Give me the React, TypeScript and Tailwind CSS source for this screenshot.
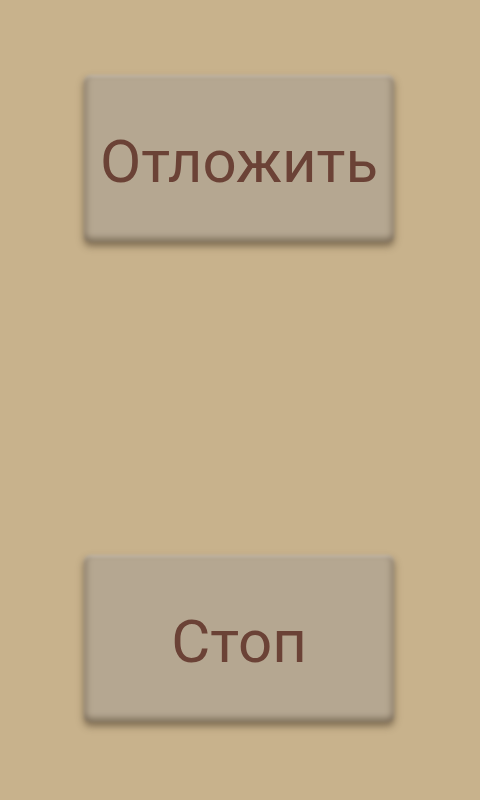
import React from "react";

function Btn({ label }: { label: string }) {
  return (
    <div className="relative w-[310px] h-[167px] flex items-center justify-center">
      <div className="absolute inset-0 rounded-[6px] bg-[#b5a791] blur-[1.5px] shadow-[0_4px_7px_rgba(60,45,30,0.55),inset_0_2px_2px_rgba(255,255,255,0.35),inset_0_-5px_5px_rgba(80,65,45,0.35),inset_4px_0_5px_rgba(90,75,55,0.22),inset_-4px_0_5px_rgba(90,75,55,0.22)]" />
      <span className="relative text-[60px] leading-none text-[#6b4236] pt-[6px]" style={{ fontFamily: "Roboto, 'Noto Sans', sans-serif" }}>
        {label}
      </span>
    </div>
  );
}

export default function App() {
  return (
    <div className="w-[480px] h-[800px] bg-[#c8b28c] flex flex-col items-center pl-[-1px] pt-[75px] gap-[313px]">
      <div className="-ml-[2px]"><Btn label="Отложить" /></div>
      <div className="-ml-[2px]"><Btn label="Стоп" /></div>
    </div>
  );
}
